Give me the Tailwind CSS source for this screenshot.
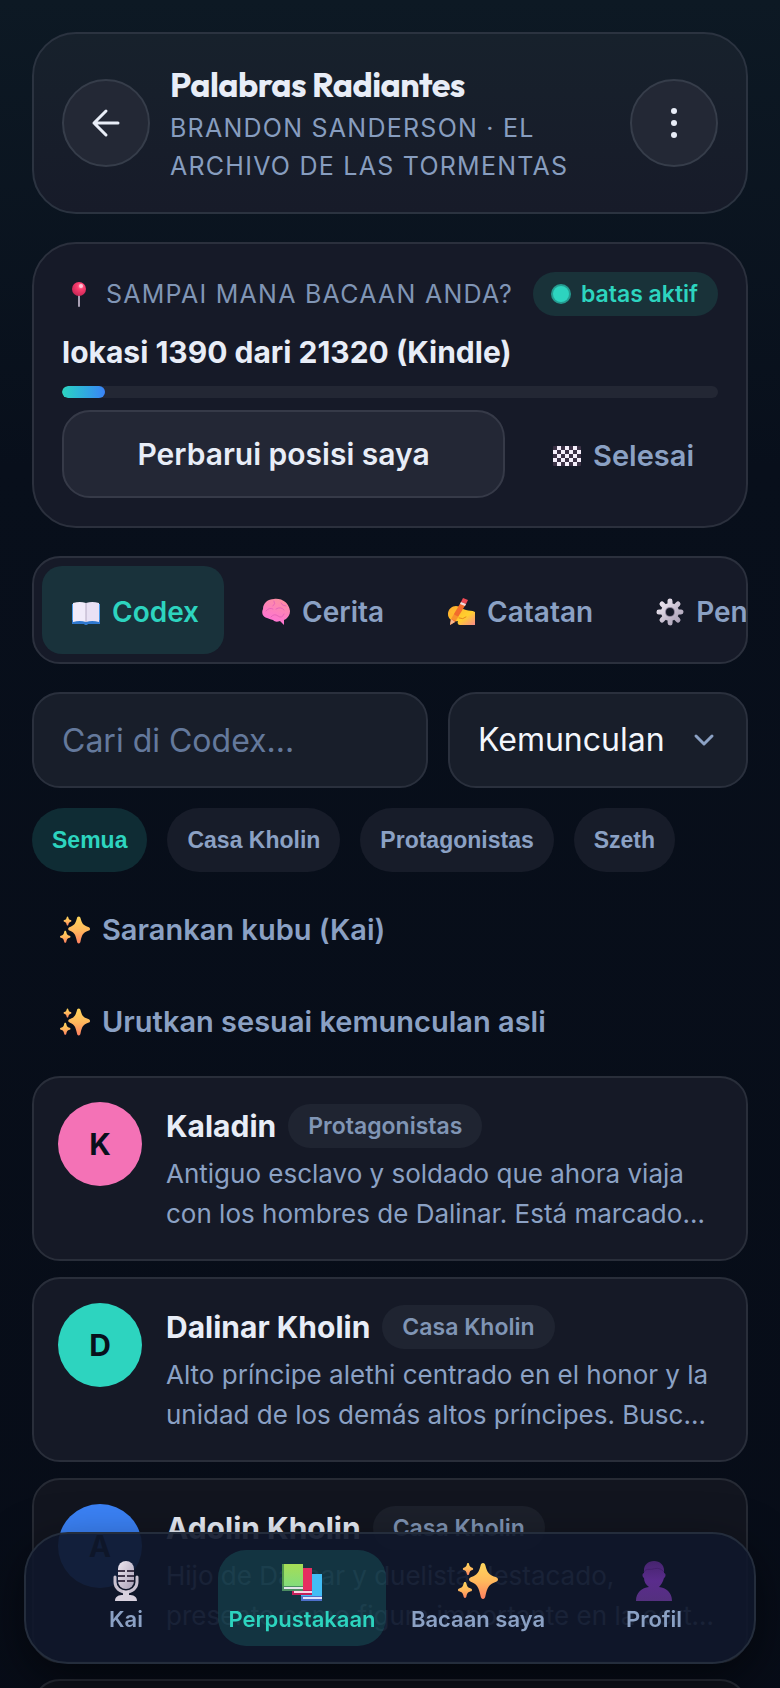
<!DOCTYPE html>
<html lang="id">
<head>
    <meta charset="UTF-8">
    <meta name="viewport" content="width=device-width, initial-scale=1.0">
    <title>Palabras Radiantes</title>
    <script src="https://cdn.jsdelivr.net/npm/@tailwindcss/browser@4"></script>
</head>
<body class="min-h-screen overflow-x-hidden bg-[#080f1b] bg-linear-to-b from-[#0d1924] via-[#080f1b] via-25% to-[#070c17] font-[Inter,sans-serif] text-[#e8edf7]">

    <!-- Shared icon shapes -->
    <svg width="0" height="0" class="absolute" aria-hidden="true">
        <defs>
            <linearGradient id="gold" x1="0" y1="0" x2="0" y2="1">
                <stop offset="0" stop-color="#ffd65c" />
                <stop offset="0.5" stop-color="#ffb95c" />
                <stop offset="1" stop-color="#ff8060" />
            </linearGradient>
            <linearGradient id="silver" x1="0" y1="0" x2="1" y2="1">
                <stop offset="0" stop-color="#eee8f2" />
                <stop offset="1" stop-color="#a99fb5" />
            </linearGradient>
            <linearGradient id="skin" x1="0" y1="0" x2="1" y2="1">
                <stop offset="0" stop-color="#ffa92e" />
                <stop offset="0.6" stop-color="#ffd02e" />
                <stop offset="1" stop-color="#f98a8a" />
            </linearGradient>
            <linearGradient id="pink" x1="0.7" y1="0" x2="0.3" y2="1">
                <stop offset="0" stop-color="#fc8fa0" />
                <stop offset="1" stop-color="#ff6fdc" />
            </linearGradient>
            <linearGradient id="purple" x1="0" y1="0" x2="0" y2="1">
                <stop offset="0" stop-color="#46246e" />
                <stop offset="0.5" stop-color="#5a2c8c" />
                <stop offset="1" stop-color="#54307f" />
            </linearGradient>
            <linearGradient id="green" x1="0" y1="0" x2="0" y2="1">
                <stop offset="0" stop-color="#a6dd55" />
                <stop offset="1" stop-color="#7bdc84" />
            </linearGradient>
            <radialGradient id="ball" cx="0.62" cy="0.3" r="0.7">
                <stop offset="0" stop-color="#ff8fae" />
                <stop offset="0.35" stop-color="#fb3f70" />
                <stop offset="1" stop-color="#c92756" />
            </radialGradient>
            <pattern id="checks" width="8" height="8" patternUnits="userSpaceOnUse">
                <rect width="8" height="8" fill="#3b3145" />
                <rect x="4" width="4" height="4" fill="#f4eefa" />
                <rect y="4" width="4" height="4" fill="#f4eefa" />
            </pattern>
        </defs>
        <symbol id="sparkles" viewBox="0 0 40 40">
            <g fill="url(#gold)">
                <path d="M25 2c1.500 0 2 1 2.400 2.400 1.900 7.100 3.300 9.200 10.200 11.600 1.500.5 2.400 1.200 2.400 2.500s-.9 2-2.400 2.500c-6.900 2.400-8.300 5.500-10.200 14.100C27.100 36.800 26.500 38 25 38s-2.100-1.200-2.400-2.900c-1.900-8.600-3.300-11.700-9.200-14.100-1.500-.6-2.400-1.200-2.400-2.500s.9-1.900 2.400-2.500c5.900-2.400 7.300-4.500 9.200-11.600C22.900 3 23.500 2 25 2z" />
                <path d="M10 2c.7 0 .9.500 1.100 1.200.6 2.200 1.100 2.900 3.200 3.600.5.200.9.500.9 1.100s-.4.900-.9 1.100c-2.100.7-2.600 1.600-3.200 3.900-.2.700-.5 1.200-1.100 1.200s-.9-.5-1.100-1.200C8.300 10.600 7.800 9.700 5.700 9c-.5-.2-.9-.5-.9-1.100s.4-.9.900-1.100c2.100-.7 2.600-1.400 3.200-3.600C9.100 2.500 9.400 2 10 2z" />
                <path d="M7 21c.9 0 1.200.6 1.400 1.500.7 2.900 1.300 4 4.400 5 .7.200 1.200.6 1.200 1.400s-.5 1.100-1.200 1.400c-3.100 1-3.700 2.100-4.400 5.300C8.200 36.400 7.900 37 7 37s-1.200-.6-1.400-1.400c-.7-3.200-1.300-4.300-4.400-5.300C.5 30 0 29.700 0 28.900s.5-1.200 1.200-1.400c3.100-1 3.700-2.100 4.400-5C5.800 21.600 6.100 21 7 21z" />
            </g>
        </symbol>
    </svg>

    <main class="flex flex-col px-8 pt-8">

        <!-- Book header -->
        <header class="flex items-center gap-5 rounded-[44px] border-2 border-[#2b3340] bg-linear-to-b from-[#17212c] to-[#171b29] px-7 py-[27px]">
            <button type="button" aria-label="Kembali" class="flex size-22 shrink-0 items-center justify-center rounded-full border-2 border-[#363d4a] bg-[#232835]">
                <svg class="size-9" viewBox="0 0 36 36" fill="none" stroke="#e8edf7" stroke-width="3" stroke-linecap="round" stroke-linejoin="round">
                    <path d="M30 18H6M18 6L6 18l12 12" />
                </svg>
            </button>
            <div class="min-w-0 flex-1">
                <h1 class="font-[Outfit,Lato,sans-serif] text-[34px] leading-12 font-bold tracking-[-0.015em]">Palabras Radiantes</h1>
                <p class="text-[25px] leading-[38px] tracking-wider text-[#879dbf] uppercase">Brandon Sanderson · El Archivo de las Tormentas</p>
            </div>
            <button type="button" aria-label="Menu" class="flex size-22 shrink-0 items-center justify-center rounded-full border-2 border-[#363d4a] bg-[#232835]">
                <svg class="h-9 w-3" viewBox="0 0 12 36" fill="#e8edf7">
                    <circle cx="6" cy="6" r="3" />
                    <circle cx="6" cy="18" r="3" />
                    <circle cx="6" cy="30" r="3" />
                </svg>
            </button>
        </header>

        <!-- Reading position -->
        <section class="mt-7 rounded-[44px] border-2 border-[#2b303d] bg-[#161a28] p-7">
            <div class="flex items-center justify-between">
                <p class="flex items-center gap-3 text-[25px] leading-10 tracking-wider whitespace-nowrap text-[#8095b5] uppercase">
                    <svg class="h-7 w-8" viewBox="0 0 32 28">
                        <path d="M17 12v14" stroke="#a9a0b4" stroke-width="2" stroke-linecap="round" />
                        <circle cx="17" cy="9" r="7" fill="url(#ball)" />
                        <circle cx="19" cy="6" r="2" fill="#ffc2d2" />
                    </svg>
                    Sampai mana bacaan Anda?
                </p>
                <span class="flex h-11 items-center gap-3 rounded-full bg-[#193239] px-5 text-[23px] font-semibold whitespace-nowrap text-[#2dd4bf]">
                    <span class="size-4 rounded-full bg-[#2dd4bf] ring-2 ring-[#259c91]"></span>
                    batas aktif
                </span>
            </div>
            <p class="mt-3 text-[30px] leading-12 font-bold">lokasi 1390 dari 21320 (Kindle)</p>
            <div class="mt-2.5 h-3 overflow-hidden rounded-full bg-[#232734]">
                <div class="h-full rounded-full bg-linear-to-r from-[#2dd4bf] to-[#3b82f6]" style="width: 6.5%"></div>
            </div>
            <div class="mt-3 flex gap-6">
                <button type="button" class="h-22 flex-1 rounded-[28px] border-2 border-[#363a48] bg-[#232735] text-[30px] font-semibold">Perbarui posisi saya</button>
                <button type="button" class="flex h-22 items-center gap-3 pt-1 pr-6 pl-6 text-[29px] font-semibold text-[#8ba1c4]">
                    <svg class="h-5 w-7" viewBox="0 0 28 20"><rect width="28" height="20" rx="1" fill="url(#checks)" /></svg>
                    Selesai
                </button>
            </div>
        </section>

        <!-- Tabs -->
        <nav class="mt-7 flex gap-2 overflow-hidden rounded-[28px] border-2 border-[#2b303d] bg-[#161a28] p-2">
            <button type="button" class="flex h-22 shrink-0 items-center gap-2.5 rounded-[20px] bg-[#19323b] pt-1 pr-[25px] pl-7 text-[28px] font-semibold text-[#2dd4bf]">
                <svg class="h-7 w-8" viewBox="0 0 28 28">
                    <path d="M0 6h28v20H16l-2 1-2-1H0z" fill="#4a9be8" />
                    <path d="M0 22h28v4H16l-2 1-2-1H0z" fill="#2f78cf" />
                    <path d="M1 5q7-2 13 0v19q-6-2-13 0z" fill="#f1ebfa" />
                    <path d="M27 5q-7-2-13 0v19q6-2 13 0z" fill="#e9e1f4" />
                    <path d="M14 5v19" stroke="#b6abc4" stroke-width="1" />
                </svg>
                Codex
            </button>
            <button type="button" class="flex h-22 shrink-0 items-center gap-2.5 pt-1 pr-[25px] pl-7 text-[28px] font-semibold text-[#8ba1c4]">
                <svg class="h-7 w-8" viewBox="0 0 28 28">
                    <path d="M12 1c8-1 15 4 16 12 0 4-2 6-4 8l-2 1v5l-4-4c-3 1-5 1-7-1-3-1-4-1-6-2-4-1-6-5-4-9C1 5 6 1 12 1z" fill="url(#pink)" />
                    <path d="M4 13q3-4 7-2M12 3q2 3-1 5M14 11q5-3 8 1M9 19q3-4 7-1t6-2M19 5q1 3 5 3" fill="none" stroke="#e765b8" stroke-width="1" stroke-linecap="round" />
                </svg>
                Cerita
            </button>
            <button type="button" class="flex h-22 shrink-0 items-center gap-2.5 pt-1 pr-[25px] pl-7 text-[28px] font-semibold text-[#8ba1c4]">
                <svg class="h-7 w-8" viewBox="0 0 28 28">
                    <path d="M1 16C1 11 5 8 9 8c4 0 6 3 10 4 3 1 6 0 9 2v13H13c-2 0-3-2-2-4-4 1-10-1-10-7z" fill="url(#skin)" />
                    <path d="M12 20q4 2 7-1" stroke="#e8861f" stroke-width="1" fill="none" stroke-linecap="round" />
                    <path d="M14 4l5 2L8 24l-5 3 1-6z" fill="#f26b2c" />
                    <path d="M14 4l2-4 5 2-2 4z" fill="#ef4a55" />
                    <path d="M13 6l5 2 1-2-5-2z" fill="#f3dbe0" />
                    <path d="M4 21l4 3-5 3z" fill="#f8b98c" />
                    <path d="M1 15q4-1 7 2l4 2-3 4-5-2q-3-2-3-6z" fill="#ffb32e" fill-opacity="0.55" />
                </svg>
                Catatan
            </button>
            <button type="button" class="flex h-22 shrink-0 items-center gap-2.5 pt-1 pr-[25px] pl-7 text-[28px] font-semibold text-[#8ba1c4]">
                <svg class="h-7 w-8" viewBox="0 0 28 28">
                    <g stroke="url(#silver)" stroke-width="5" stroke-linecap="round">
                        <path d="M14 3l.1 22M3 14l22 .1M6 6l16 16M22 6L6 22" />
                    </g>
                    <circle cx="14" cy="14" r="9" fill="url(#silver)" />
                    <circle cx="14" cy="14" r="5" fill="#8b8098" />
                    <circle cx="14" cy="14" r="4" fill="#161a28" />
                </svg>
                Pengaturan
            </button>
        </nav>

        <!-- Search and sort -->
        <div class="mt-7 flex gap-5">
            <input type="search" aria-label="Cari di Codex" placeholder="Cari di Codex..." class="h-24 min-w-0 flex-1 rounded-[28px] border-2 border-[#2a303d] bg-[#181e2a] px-7 text-[32px] placeholder:text-[#64799c]">
            <div class="relative w-[300px] shrink-0">
                <select aria-label="Urutkan" class="h-24 w-full appearance-none rounded-[28px] border-2 border-[#2a303d] bg-[#181e2a] px-7 text-[32px] text-[#f3f6fc]">
                    <option>Kemunculan</option>
                    <option>Nama</option>
                </select>
                <svg class="pointer-events-none absolute top-9 right-8 size-6" viewBox="0 0 24 24" fill="none" stroke="#8ba1c4" stroke-width="3" stroke-linecap="round" stroke-linejoin="round">
                    <path d="M4 8l8 8 8-8" />
                </svg>
            </div>
        </div>

        <!-- Group filters -->
        <div class="mt-5 flex gap-5 font-['Liberation_Sans',Arial,sans-serif] text-[23px] font-bold text-[#8ba1c4]">
            <button type="button" class="h-16 rounded-full bg-[#0f2c34] px-5 text-[#2dd4bf]">Semua</button>
            <button type="button" class="h-16 rounded-full bg-[#171c29] px-5">Casa Kholin</button>
            <button type="button" class="h-16 rounded-full bg-[#171c29] px-5">Protagonistas</button>
            <button type="button" class="h-16 rounded-full bg-[#171c29] px-5">Szeth</button>
        </div>

        <div class="mt-3 flex flex-col items-start gap-1 text-[29px] font-semibold text-[#8ba1c4]">
            <button type="button" class="flex h-22 items-center gap-3 px-7 pt-1">
                <svg class="size-[30px]"><use href="#sparkles" /></svg>
                Sarankan kubu (Kai)
            </button>
            <button type="button" class="flex h-22 items-center gap-3 px-7 pt-1">
                <svg class="size-[30px]"><use href="#sparkles" /></svg>
                Urutkan sesuai kemunculan asli
            </button>
        </div>

        <!-- Characters -->
        <div class="mt-3 flex flex-col gap-4">
            <article class="flex h-[185px] gap-6 rounded-[28px] border-2 border-[#292e3a] bg-[#151926] p-6">
                <div class="flex size-21 shrink-0 items-center justify-center rounded-full bg-[#f472b6] text-[30px] font-bold text-[#08101c]">K</div>
                <div class="min-w-0 flex-1">
                    <div class="flex items-center gap-3">
                        <h2 class="text-[30px] leading-12 font-bold">Kaladin</h2>
                        <span class="flex h-11 items-center rounded-full bg-[#1f2431] px-5 text-[23px] font-semibold text-[#8095b5]">Protagonistas</span>
                    </div>
                    <p class="mt-1 mr-1 line-clamp-2 text-[26px] leading-10 text-[#8ba1c4]">Antiguo esclavo y soldado que ahora viaja con los hombres de Dalinar. Está marcado por su pasado y por la guerra.</p>
                </div>
            </article>
            <article class="flex h-[185px] gap-6 rounded-[28px] border-2 border-[#292e3a] bg-[#151926] p-6">
                <div class="flex size-21 shrink-0 items-center justify-center rounded-full bg-[#2dd4bf] text-[30px] font-bold text-[#08101c]">D</div>
                <div class="min-w-0 flex-1">
                    <div class="flex items-center gap-3">
                        <h2 class="text-[30px] leading-12 font-bold">Dalinar Kholin</h2>
                        <span class="flex h-11 items-center rounded-full bg-[#1f2431] px-5 text-[23px] font-semibold text-[#8095b5]">Casa Kholin</span>
                    </div>
                    <p class="mt-1 mr-1 line-clamp-2 text-[26px] leading-10 text-[#8ba1c4]">Alto príncipe alethi centrado en el honor y la unidad de los demás altos príncipes. Busca reunirlos bajo un mismo mando.</p>
                </div>
            </article>
            <article class="flex h-[185px] gap-6 rounded-[28px] border-2 border-[#262a34] bg-[#12151f] p-6">
                <div class="flex size-21 shrink-0 items-center justify-center rounded-full bg-[#3b82f6] text-[30px] font-bold text-[#08101c]">A</div>
                <div class="min-w-0 flex-1">
                    <div class="flex items-center gap-3">
                        <h2 class="text-[30px] leading-12 font-bold">Adolin Kholin</h2>
                        <span class="flex h-11 items-center rounded-full bg-[#1c202b] px-5 text-[23px] font-semibold text-[#8095b5]">Casa Kholin</span>
                    </div>
                    <p class="mt-1 mr-1 line-clamp-2 text-[26px] leading-10 text-[#8ba1c4]">Hijo de Dalinar y duelista destacado, presente como figura importante en la corte de los príncipes alethi.</p>
                </div>
            </article>
            <article class="h-[185px] rounded-[28px] border-2 border-[#262a34] bg-[#0f121b]"></article>
        </div>
    </main>

    <!-- Bottom navigation -->
    <nav class="fixed inset-x-6 bottom-6 grid grid-cols-4 gap-2 rounded-[44px] border-2 border-[#242d3c] bg-[#0f172a]/92 p-4 text-[22px] leading-8 font-semibold whitespace-nowrap text-[#8ba1c4] shadow-[0_16px_48px_rgba(0,0,0,0.5)]">
        <a href="#kai" class="flex h-24 flex-col items-center justify-center gap-0.5">
            <svg class="size-10" viewBox="0 0 40 40">
                <path d="M9 16v5c0 6 5 10 11 10s11-4 11-10v-5" fill="none" stroke="#c9c1d0" stroke-width="3" stroke-linecap="round" />
                <path d="M17 30h6v4c4 0 8 1 8 6H9c0-5 4-6 8-6z" fill="#d8d1de" />
                <rect x="12" y="0" width="16" height="28" rx="8" fill="url(#silver)" />
                <path d="M12 10h7M21 10h7M12 15h7M21 15h7M12 20h7M21 20h7" stroke="#40364b" stroke-width="2" />
            </svg>
            Kai
        </a>
        <a href="#perpustakaan" class="flex h-24 flex-col items-center justify-center gap-0.5 rounded-[28px] bg-[#2dd4bf]/16 text-[#2dd4bf]">
            <svg class="size-10" viewBox="0 0 40 40">
                <path d="M19 13h21v27H19z" fill="#42bdf5" />
                <path d="M19 35h21v5H19z" fill="#4d6fca" />
                <path d="M21 36h19v2H21z" fill="#dfe4fb" />
                <path d="M10 7h20v27H10z" fill="#e62e60" />
                <path d="M10 29h20v5H10z" fill="#c41f5a" />
                <path d="M12 30h18v2H12z" fill="#fbd3e4" />
                <path d="M0 3h21v27H0z" fill="url(#green)" />
                <path d="M0 3h2v27H0z" fill="#549a4c" />
                <path d="M0 25h21v5H0z" fill="#4c8d62" />
                <path d="M2 26h19v2H2z" fill="#e3e4ea" />
            </svg>
            Perpustakaan
        </a>
        <a href="#bacaan" class="flex h-24 flex-col items-center justify-center gap-0.5">
            <svg class="size-10"><use href="#sparkles" /></svg>
            Bacaan saya
        </a>
        <a href="#profil" class="flex h-24 flex-col items-center justify-center gap-0.5">
            <svg class="size-10" viewBox="0 0 40 40">
                <path d="M20 0c6 0 10 4 10 9v3c2 0 2 4 0 5-1 4-3 7-5 9 7 1 13 5 13 14H2c0-9 6-13 13-14-3-2-5-5-5-9-2-1-2-5 0-5V9c0-5 4-9 10-9z" fill="url(#purple)" />
                <path d="M10 11c2-4 5-2 9-3s8-1 11 3" fill="none" stroke="#43206b" stroke-width="1" />
            </svg>
            Profil
        </a>
    </nav>
</body>
</html>
